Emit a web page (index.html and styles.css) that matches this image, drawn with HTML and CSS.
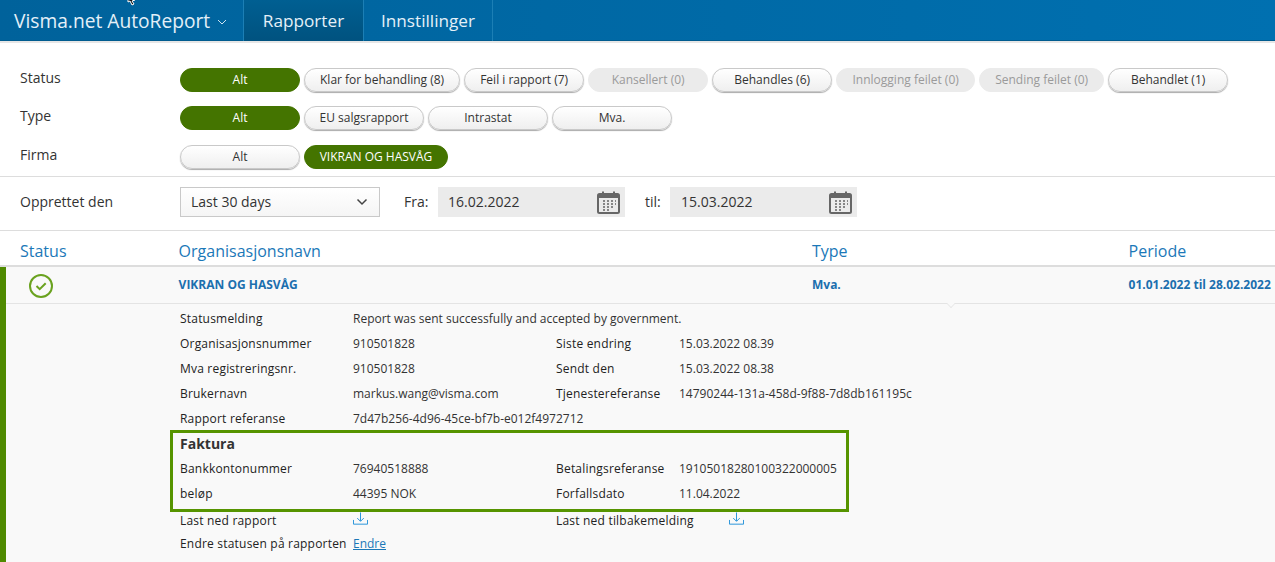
FILE: index.html
```html
<!DOCTYPE html>
<html lang="no">
<head>
<meta charset="utf-8">
<title>Visma.net AutoReport</title>
<link rel="stylesheet" href="styles.css">
</head>
<body>
<header class="nav">
  <div class="brand">Visma.net AutoReport
    <svg class="caret" width="10" height="6" viewBox="0 0 10 6"><path d="M1 1l4 4 4-4" fill="none" stroke="#cfe3f1" stroke-width="1"/></svg>
  </div>
  <a class="tab tab-active">Rapporter</a>
  <a class="tab tab-plain">Innstillinger</a>
  <svg class="cursor" width="12" height="8" viewBox="0 0 12 8"><path d="M1-3l0 5 2-1 2 4 2-1-2-3 3-1z" fill="#111" stroke="#fff" stroke-width="1"/></svg>
</header>

<section class="filters">
  <div class="filter-row row-status">
    <span class="filter-label">Status</span>
    <div class="pills">
      <span class="pill on w120">Alt</span>
      <span class="pill">Klar for behandling (8)</span>
      <span class="pill w120">Feil i rapport (7)</span>
      <span class="pill off w120">Kansellert (0)</span>
      <span class="pill w120">Behandles (6)</span>
      <span class="pill off w138">Innlogging feilet (0)</span>
      <span class="pill off w125">Sending feilet (0)</span>
      <span class="pill w120">Behandlet (1)</span>
    </div>
  </div>
  <div class="filter-row row-type">
    <span class="filter-label">Type</span>
    <div class="pills">
      <span class="pill on w120">Alt</span>
      <span class="pill w120">EU salgsrapport</span>
      <span class="pill w120">Intrastat</span>
      <span class="pill w120">Mva.</span>
    </div>
  </div>
  <div class="filter-row row-firma">
    <span class="filter-label">Firma</span>
    <div class="pills">
      <span class="pill w120">Alt</span>
      <span class="pill on w144">VIKRAN OG HASVÅG</span>
    </div>
  </div>
</section>

<section class="dates">
  <span class="filter-label">Opprettet den</span>
  <div class="select">Last 30 days
    <svg width="12" height="8" viewBox="0 0 12 8"><path d="M1.500 1.500L6 6l4.500-4.500" fill="none" stroke="#444" stroke-width="1.500"/></svg>
  </div>
  <span class="date-label fra">Fra:</span>
  <div class="date-input">16.02.2022
    <svg class="cal" width="23" height="23" viewBox="0 0 23 23"><use href="#cal"/></svg>
  </div>
  <span class="date-label til">til:</span>
  <div class="date-input date-to">15.03.2022
    <svg class="cal" width="23" height="23" viewBox="0 0 23 23"><use href="#cal"/></svg>
  </div>
</section>

<div class="thead">
  <span>Status</span><span>Organisasjonsnavn</span><span>Type</span><span>Periode</span>
</div>

<main class="report">
  <div class="summary">
    <svg class="ok" width="24" height="24" viewBox="0 0 24 24"><circle cx="12" cy="12" r="11" fill="none" stroke="#6aa21f" stroke-width="2"/><path d="M7.500 12l3.200 3.200 6-6" fill="none" stroke="#6aa21f" stroke-width="2"/></svg>
    <span class="org">VIKRAN OG HASVÅG</span>
    <span class="type">Mva.</span>
    <span class="period">01.01.2022 til 28.02.2022</span>
    <span class="notch"></span>
  </div>
  <div class="details">
    <div class="line"><b>Statusmelding</b><span>Report was sent successfully and accepted by government.</span></div>
    <div class="line"><b>Organisasjonsnummer</b><span>910501828</span><b>Siste endring</b><span>15.03.2022 08.39</span></div>
    <div class="line"><b>Mva registreringsnr.</b><span>910501828</span><b>Sendt den</b><span>15.03.2022 08.38</span></div>
    <div class="line"><b>Brukernavn</b><span>markus.wang@visma.com</span><b>Tjenestereferanse</b><span>14790244-131a-458d-9f88-7d8db161195c</span></div>
    <div class="line"><b>Rapport referanse</b><span>7d47b256-4d96-45ce-bf7b-e012f4972712</span></div>
    <div class="invoice">
      <h3>Faktura</h3>
      <div class="line"><b>Bankkontonummer</b><span>76940518888</span><b>Betalingsreferanse</b><span>19105018280100322000005</span></div>
      <div class="line"><b>beløp</b><span>44395 NOK</span><b>Forfallsdato</b><span>11.04.2022</span></div>
    </div>
    <div class="line line-dl"><b>Last ned rapport</b><span><svg width="15" height="14" viewBox="0 0 16 14"><use href="#dl"/></svg></span><b>Last ned tilbakemelding</b><span class="dl-2"><svg width="15" height="14" viewBox="0 0 16 14"><use href="#dl"/></svg></span></div>
    <div class="line line-last"><b>Endre statusen på rapporten</b><span><a class="link">Endre</a></span></div>
  </div>
</main>

<svg class="defs" width="0" height="0">
  <defs>
    <g id="cal">
      <rect x="1" y="3" width="21" height="19" rx="1.500" fill="none" stroke="#666" stroke-width="2"/>
      <rect x="1" y="3" width="21" height="4" fill="#666"/>
      <path d="M6 0.500v4M17 0.500v4" stroke="#666" stroke-width="2"/>
      <path d="M6 10h2M10 10h2M14 10h2M18 10h1M6 13h2M10 13h2M14 13h2M18 13h1M6 16h2M10 16h2M14 16h2M6 19h2M10 19h2" stroke="#666" stroke-width="1.500"/>
    </g>
    <g id="dl" fill="none" stroke="#1f8fd8" stroke-width="1">
      <path d="M0.500 8v4.500h15V8"/>
      <path d="M8 0v9M4.500 6l3.500 3.500L11.500 6"/>
    </g>
  </defs>
</svg>
</body>
</html>
```

FILE: styles.css
```css
* { box-sizing: border-box; }
html, body { margin: 0; padding: 0; height: 562px; overflow: hidden; }
body {
  font-family: "Open Sans", "Liberation Sans", sans-serif;
  color: #333;
  background: #fff;
  font-size: 14px;
}

.nav {
  height: 43px;
  display: flex;
  position: relative;
  background: linear-gradient(90deg, #00629b, #0070b0);
  border-bottom: 2px solid #e6e6e6;
  box-shadow: inset 0 -1px 0 #005c8f;
}
.brand {
  width: 243px;
  padding-left: 14px;
  font-size: 19.2px;
  line-height: 41px;
  color: #e4f0f8;
  display: flex;
  align-items: center;
  gap: 7px;
}
.caret { margin-top: 2px; }
.tab {
  font-size: 17.200px;
  line-height: 41px;
  color: #e4f0f8;
  text-align: center;
  border-left: 1px solid #1c7fb5;
}
.tab-active { width: 120px; background: linear-gradient(#005f92, #00527f); }
.tab-plain { width: 130px; border-right: 1px solid #1c7fb5; }
.cursor { position: absolute; left: 127px; top: 0; }

.filters {
  height: 134px;
  padding: 25px 0 0 20px;
  border-bottom: 1px solid #ddd;
}
.filter-row { display: flex; height: 24px; }
.row-type { margin-top: 14px; }
.row-firma { margin-top: 15px; }
.filter-label { width: 160px; flex: none; font-size: 14px; line-height: 20px; color: #333; }
.pills { display: flex; gap: 4px; }
.pill {
  height: 24px;
  padding: 0 15px;
  border: 1px solid #c9c9c9;
  border-radius: 12px;
  background: linear-gradient(#fff, #efefef);
  box-shadow: 0 1px 1px #aaa;
  font-size: 12px;
  line-height: 22px;
  text-align: center;
  color: #333;
  white-space: nowrap;
}
.pill.on {
  background: #447400;
  border-color: #447400;
  color: #fff;
  box-shadow: none;
}
.pill.off {
  background: #ebebeb;
  border-color: #ebebeb;
  color: #9a9a9a;
  box-shadow: none;
}
.w120 { width: 120px; padding: 0; }
.w144 { width: 144px; padding: 0; }
.w138 { width: 139px; padding: 0; }
.w125 { width: 125px; padding: 0; }

.dates {
  height: 54px;
  padding: 10px 0 0 20px;
  display: flex;
  border-bottom: 1px solid #ddd;
}
.dates .filter-label { line-height: 30px; }
.select {
  width: 200px;
  height: 30px;
  padding: 0 11px 2px 10px;
  border: 1px solid #c9c9c9;
  background: linear-gradient(#fff, #f5f5f5);
  display: flex;
  align-items: center;
  justify-content: space-between;
  font-size: 14px;
}
.select svg { margin-top: 2px; }
.date-label { font-size: 14px; line-height: 30px; }
.fra { margin-left: 24px; width: 34px; }
.til { margin-left: 20px; width: 25px; }
.date-input {
  width: 187px;
  height: 30px;
  padding: 0 5px 2px 10px;
  background: #ebebeb;
  display: flex;
  align-items: center;
  justify-content: space-between;
  font-size: 14px;
}
.date-to { padding-left: 11px; }
.cal { flex: none; margin-top: 2px; }

.thead {
  height: 36px;
  padding: 10px 0 0 20px;
  display: grid;
  grid-template-columns: 158.600px 633.400px 316.600px 1fr;
  font-size: 16px;
  line-height: 20px;
  color: #1b78b8;
  border-bottom: 2px solid #ddd;
}

.report {
  height: 295px;
  background: #f9f9f9;
  border-left: 6px solid #4f8a00;
}
.summary {
  height: 37px;
  display: grid;
  position: relative;
  grid-template-columns: 172.600px 633.400px 316.600px 1fr;
  align-items: center;
  border-bottom: 1px solid #e4e4e4;
  font-size: 12px;
  font-weight: 700;
  color: #1b6fae;
  white-space: nowrap;
}
.ok { margin-left: 23px; margin-top: 2px; }
.org, .type, .period { margin-top: -2px; }
.notch {
  position: absolute;
  left: 941px;
  top: 33px;
  width: 8px;
  height: 8px;
  background: #f9f9f9;
  border-right: 1px solid #e4e4e4;
  border-bottom: 1px solid #e4e4e4;
  transform: rotate(45deg) scale(.7);
}

.details { padding: 2px 0 0 174px; font-size: 12px; }
.line {
  display: grid;
  grid-template-columns: 173px 203px 123px 1fr;
  height: 25px;
  line-height: 25px;
  white-space: nowrap;
  color: #333;
}
.line b { font-weight: 500; color: #222; letter-spacing: .2px; }
.invoice {
  margin: -1px 0 0 -10px;
  width: 679px;
  height: 82px;
  padding: 0 0 0 7px;
  border: 3px solid #569400;
}
.invoice h3 {
  margin: 0;
  font-size: 14px;
  font-weight: 700;
  line-height: 21px;
  height: 23px;
  color: #333;
}
.line-dl { height: 22px; line-height: 18px; }
.line-dl svg { display: block; }
.dl-2 { padding-left: 50px; }
.line-last { height: 20px; line-height: 20px; }
.link { color: #1b78b8; text-decoration: underline; }
.defs { position: absolute; }
```
